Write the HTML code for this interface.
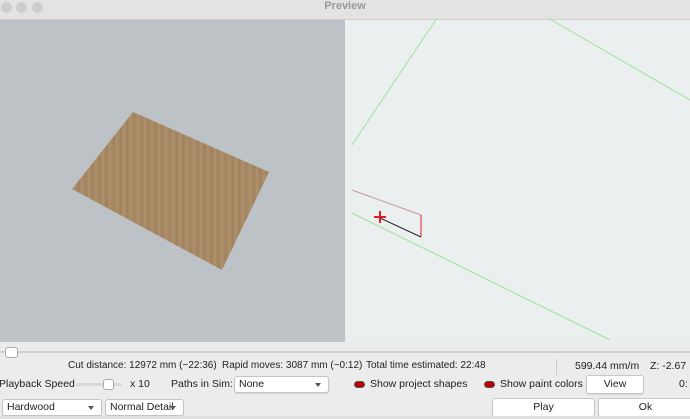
<!DOCTYPE html><html><head><style>
body{margin:0;width:690px;height:419px;overflow:hidden;background:#ececec;font-family:"Liberation Sans",sans-serif;font-size:10.5px;color:#222;position:relative}
.a{position:absolute;white-space:nowrap}
.s{font-size:10px}
.sel{position:absolute;background:#fff;border:1px solid #c4c4c4;border-radius:3px;height:17px;line-height:15px;padding-left:4px;box-sizing:border-box;box-shadow:0 1px 1px rgba(0,0,0,.1)}
.sel:after{content:"";position:absolute;right:7px;top:6px;border:3px solid transparent;border-top:4px solid #555}
.btn{position:absolute;background:#fff;border:1px solid #c8c8c8;border-radius:3px;height:19px;line-height:17px;text-align:center;box-sizing:border-box;box-shadow:0 1px 1px rgba(0,0,0,.1)}
.tg{position:absolute;width:11px;height:7px;border-radius:4px;border:1px solid #555;background:#b00;box-sizing:border-box}
</style></head><body>
<div class="a" style="left:0;top:0;width:690px;height:19px;background:#e4e3e2;border-bottom:1px solid #d0d0d0"></div>
<div class="a" style="left:1px;top:2px;width:11px;height:11px;border-radius:50%;background:#cdcdcd"></div>
<div class="a" style="left:16px;top:2px;width:11px;height:11px;border-radius:50%;background:#cdcdcd"></div>
<div class="a" style="left:32px;top:2px;width:11px;height:11px;border-radius:50%;background:#cdcdcd"></div>
<div class="a" style="left:0;top:0;width:690px;text-align:center;line-height:12px;font-weight:bold;color:#999;font-size:11px">Preview</div>
<div class="a" style="left:0;top:20px;width:345px;height:322px;background:#bcc2c6"></div>
<div class="a" style="left:346px;top:20px;width:344px;height:322px;background:#ecefef"></div>
<svg class="a" style="left:0;top:0" width="690" height="345">
<defs><pattern id="w" width="7" height="40" patternUnits="userSpaceOnUse"><rect width="7" height="40" fill="#a78865"/><rect x="1" width="1" height="40" fill="#967756" opacity=".5"/><rect x="4" width="2" height="40" fill="#b4966f" opacity=".5"/></pattern></defs>
<polygon points="133,112 269,172 222,270 72,189" fill="url(#w)"/>
<line x1="437" y1="18" x2="352" y2="145" stroke="#9be49b"/>
<line x1="548" y1="18" x2="690" y2="100" stroke="#9be49b"/>
<line x1="352" y1="213" x2="610" y2="340" stroke="#9be49b"/>
<polyline points="352,190 421,215" stroke="#c49a9a" fill="none"/>
<line x1="421" y1="215" x2="421" y2="237" stroke="#e02020"/>
<line x1="380" y1="218" x2="421" y2="237" stroke="#222"/>
<line x1="374" y1="217" x2="386" y2="217" stroke="#e02020" stroke-width="2"/>
<line x1="380" y1="211" x2="380" y2="223" stroke="#e02020" stroke-width="2"/>
</svg>
<div class="a" style="left:0;top:351px;width:690px;height:2px;background:#d0d0d0"></div>
<div class="a" style="left:5px;top:347px;width:11px;height:9px;border-radius:3px;background:#fff;border:1px solid #aaa"></div>
<div class="a s" style="left:68px;top:360px">Cut distance: 12972 mm (~22:36)</div>
<div class="a s" style="left:222px;top:360px">Rapid moves: 3087 mm (~0:12)</div>
<div class="a s" style="left:366px;top:360px">Total time estimated: 22:48</div>
<div class="a" style="left:556px;top:359px;width:1px;height:16px;background:#ccc"></div>
<div class="a" style="left:575px;top:360px">599.44 mm/m</div>
<div class="a" style="left:650px;top:360px">Z: -2.67</div>
<div class="a" style="left:-1px;top:378px">Playback Speed</div>
<div class="a" style="left:76px;top:383px;width:46px;height:3px;background:#d8d8d8;border-radius:2px"></div>
<div class="a" style="left:103px;top:379px;width:9px;height:9px;border-radius:3px;background:#fff;border:1px solid #aaa"></div>
<div class="a" style="left:130px;top:378px">x 10</div>
<div class="a" style="left:171px;top:378px">Paths in Sim:</div>
<div class="sel" style="left:234px;top:376px;width:95px">None</div>
<div class="tg" style="left:354px;top:381px"></div>
<div class="a" style="left:370px;top:378px">Show project shapes</div>
<div class="tg" style="left:484px;top:381px"></div>
<div class="a" style="left:500px;top:378px">Show paint colors</div>
<div class="btn" style="left:586px;top:375px;width:58px">View</div>
<div class="a" style="left:679px;top:378px">0:</div>
<div class="sel" style="left:2px;top:399px;width:100px">Hardwood</div>
<div class="sel" style="left:105px;top:399px;width:79px">Normal Detail</div>
<div class="btn" style="left:492px;top:398px;width:103px">Play</div>
<div class="btn" style="left:598px;top:398px;width:95px">Ok</div>
<div class="a" style="left:0;top:416px;width:690px;height:3px;background:#e0e0e0"></div>
</body></html>
